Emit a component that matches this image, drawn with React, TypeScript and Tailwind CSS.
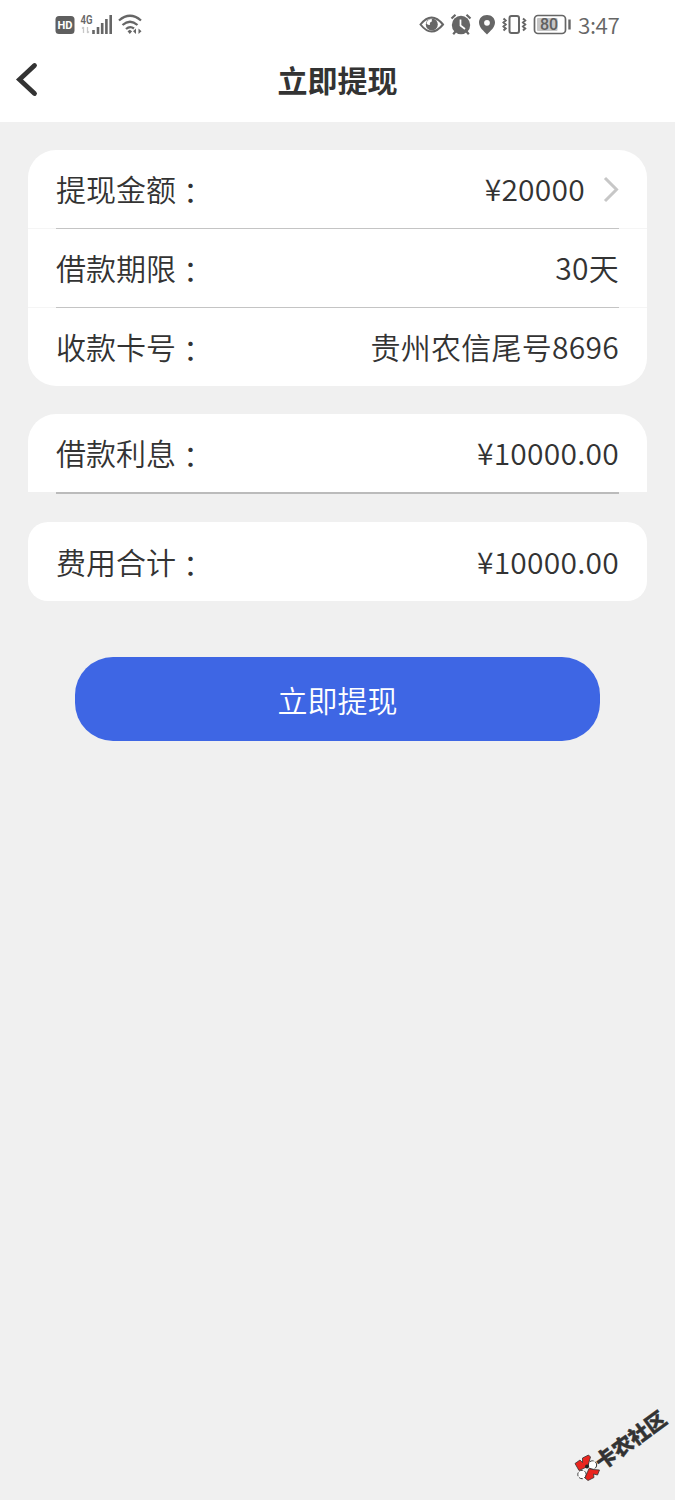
import React from "react";

function StatusBar() {
  return (
    <div className="flex h-[50px] items-start pt-[12px] text-[#666]">
      <svg className="ml-[54px]" width="90" height="26" viewBox="54 12 90 26" fill="none">
        <rect x="55.5" y="16" width="19" height="18" rx="3.5" fill="#5f5f5f" />
        <text x="65" y="29.2" textAnchor="middle" fontSize="11.5" fontWeight="700" fill="#fff" textLength="15" lengthAdjust="spacingAndGlyphs" fontFamily="Roboto, sans-serif">HD</text>
        <text x="80.5" y="23.5" fontSize="12" fontWeight="600" fill="#666" textLength="12" lengthAdjust="spacingAndGlyphs" fontFamily="Roboto, sans-serif">4G</text>
        <path d="M83.500 27v6M82 28.500l1.500-1.500M87.500 27v6M89 31.500l-1.500 1.500" stroke="#c8c8c8" strokeWidth="1.300" />
        <path d="M93.500 30v4M98 27v7M102.200 23v11M106.400 19v15M110.700 15v19" stroke="#666" strokeWidth="2.600" />
        <path d="M119 20.500Q130 11 141 20.500M122.500 25Q130 18.500 137.500 25M126 29Q130 25.500 134 28.500" stroke="#666" strokeWidth="2.300" />
        <path d="M127.500 31.300l2.300-1.500 2.300 1.500-2.300 2.600zM133 31.300l3-2.800v5.600zM141.500 31.300l-3-2.800v5.600z" fill="#666" />
      </svg>
      <svg className="ml-[274px]" width="156" height="26" viewBox="418 12 156 26" fill="none">
        <path d="M420.500 24.500Q431.500 10.500 443 24.500Q431.500 38.500 420.500 24.500Z" stroke="#666" strokeWidth="2" />
        <circle cx="431.800" cy="24.500" r="6" fill="#666" />
        <path d="M431.800 24.500v-5.500a5.500 5.500 0 0 0-5.300 4.500q2 2.500 5.300 1z" fill="#fff" />
        <circle cx="432.300" cy="24" r="2.500" fill="#666" />
        <circle cx="461" cy="25" r="9.200" fill="#666" />
        <path d="M451.500 18.500l4-3.700M470.500 18.500l-4-3.700M455.500 31.500l-2.300 2.700M466.500 31.500l2.300 2.700" stroke="#666" strokeWidth="2.200" />
        <path d="M460.500 19.500v6l4.500 3.500" stroke="#fff" strokeWidth="1.700" />
        <path fillRule="evenodd" d="M487 15c-4.800 0-8 3.400-8 7.600 0 5 5 8.800 8 12 3-3.200 8-7 8-12 0-4.200-3.200-7.600-8-7.600zm0 4.900a2.900 2.900 0 1 0 0 5.800 2.900 2.900 0 0 0 0-5.800z" fill="#666" />
        <rect x="509.500" y="16" width="9.500" height="17" rx="2" stroke="#666" strokeWidth="2" />
        <path d="M503.500 18.500l2.200 2-2.200 2 2.200 2-2.200 2 2.200 2-2.200 2M523 18.500l2.200 2-2.200 2 2.200 2-2.200 2 2.200 2-2.200 2" stroke="#666" strokeWidth="2" />
        <rect x="534.500" y="15.500" width="31" height="18" rx="3.500" stroke="#666" strokeWidth="1.700" />
        <rect x="537" y="18" width="20.500" height="13" rx="1" fill="#c6c6c6" />
        <text x="549" y="30.300" textAnchor="middle" fontSize="16" fontWeight="500" fill="#606060" fontFamily="Roboto, sans-serif">80</text>
        <path d="M569.500 19.500v10" stroke="#666" strokeWidth="2.400" />
      </svg>
      <span className="ml-[4px] font-['Noto_Sans_CJK_SC',sans-serif] text-[22.5px] font-[350] leading-[24px] tracking-[-0.4px]">3:47</span>
    </div>
  );
}

function Row({ label, value, arrow = false, className = "" }: { label: string; value: string; arrow?: boolean; className?: string }) {
  return (
    <div className={"flex h-[78px] items-center justify-between pb-[2px] pl-[28px] pr-[28px] " + className}>
      <span className="flex">
        {label}
        <span className="-ml-[0.500px] pt-[6px] leading-[38px] font-['Noto_Sans_CJK_TC',sans-serif]" lang="zh-Hant">：</span>
      </span>
      <span className="flex items-center tracking-[0.25px]">
        {value}
        {arrow && (
          <svg className="ml-[18px] mt-[2px]" width="16" height="28" viewBox="0 0 16 28" fill="none">
            <path d="M2 3l11.500 11.500L2 26" stroke="#c7c7c7" strokeWidth="3" />
          </svg>
        )}
      </span>
    </div>
  );
}

function Divider() {
  return <div className="h-px bg-[#f5f5f5] px-[28px]"><div className="h-px bg-[#c4c4c4]" /></div>;
}

export default function App() {
  return (
    <div className="relative h-[1500px] w-[675px] overflow-hidden bg-[#f0f0f0] font-['Noto_Sans_CJK_SC',sans-serif] text-[30px] font-[350] leading-[44px] text-[#333]">
      <header className="h-[122px] bg-white">
        <StatusBar />
        <div className="flex h-[58px] items-center">
          <svg className="ml-[14px]" width="26" height="36" viewBox="14 61 26 36" fill="none">
            <path d="M34.500 65.500L19.500 79.500L34.500 93.500" stroke="#333" strokeWidth="4.800" strokeLinecap="round" />
          </svg>
          <h1 className="mr-[40px] flex-1 text-center font-bold">立即提现</h1>
        </div>
      </header>
      <main className="px-[28px] pt-[28px]">
        <section className="rounded-[28px] bg-white">
          <Row label="提现金额" value="¥20000" arrow />
          <Divider />
          <Row label="借款期限" value="30天" />
          <Divider />
          <Row label="收款卡号" value="贵州农信尾号8696" />
        </section>
        <section className="mt-[28px]">
          <Row label="借款利息" value="¥10000.00" className="rounded-t-[28px] bg-white" />
          <div className="mx-[28px] h-[2px] bg-[#bbb]" />
        </section>
        <section className="mt-[28px] h-[79px] rounded-[20px] bg-white pt-[1px]">
          <Row label="费用合计" value="¥10000.00" />
        </section>
        <button className="mx-auto mt-[56px] block h-[84px] w-[525px] rounded-[38px] bg-[#3e66e4] text-center text-white">立即提现</button>
      </main>
      <svg className="absolute left-[572px] top-[1452px]" width="32" height="32" viewBox="572 1452 32 32">
        <circle cx="592.500" cy="1465" r="4.200" fill="#fff" stroke="#333" strokeWidth="1" strokeDasharray="4 1.500" />
        <circle cx="582" cy="1474.500" r="4.200" fill="#fff" stroke="#333" strokeWidth="1" strokeDasharray="4 1.500" />
        <path d="M575 1463.500l5-3.500 2.500 2.500 0-4.500 6-3 2 2-2.800 9.500-8.700 4z" fill="#e9251f" stroke="#333" strokeWidth="0.800" />
        <path d="M589 1468.500l4 1 6.500 0.500-2 5-4-1 0.500 3.500-6 3-3-2.500z" fill="#e9251f" stroke="#333" strokeWidth="0.800" />
        <circle cx="587" cy="1466.500" r="2" fill="#222" />
      </svg>
      <span className="absolute left-[585px] top-[1425px] w-[90px] rotate-[-36deg] whitespace-nowrap text-center text-[20.5px] font-black leading-[28px] [-webkit-text-stroke:0.4px_#333]">卡农社区</span>
    </div>
  );
}
